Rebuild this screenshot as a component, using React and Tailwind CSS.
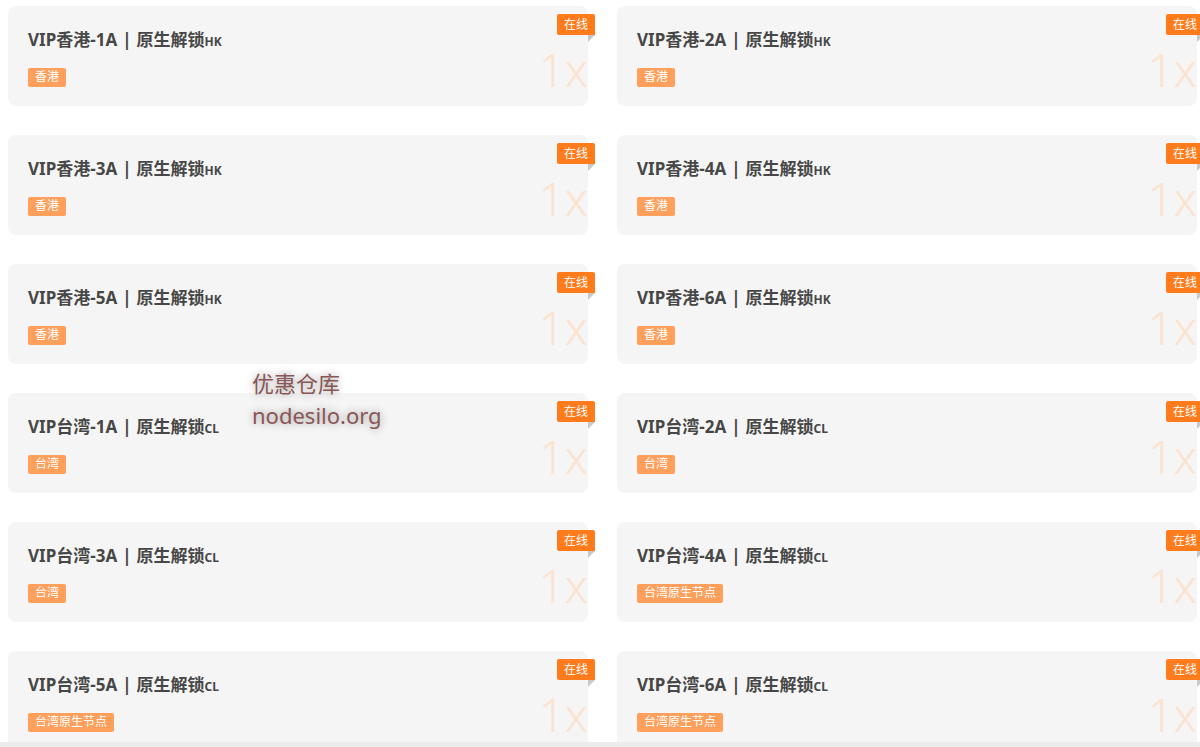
const nodes = [
  { name: 'VIP香港-1A', suffix: 'HK', tag: '香港' },
  { name: 'VIP香港-2A', suffix: 'HK', tag: '香港' },
  { name: 'VIP香港-3A', suffix: 'HK', tag: '香港' },
  { name: 'VIP香港-4A', suffix: 'HK', tag: '香港' },
  { name: 'VIP香港-5A', suffix: 'HK', tag: '香港' },
  { name: 'VIP香港-6A', suffix: 'HK', tag: '香港' },
  { name: 'VIP台湾-1A', suffix: 'CL', tag: '台湾' },
  { name: 'VIP台湾-2A', suffix: 'CL', tag: '台湾' },
  { name: 'VIP台湾-3A', suffix: 'CL', tag: '台湾' },
  { name: 'VIP台湾-4A', suffix: 'CL', tag: '台湾原生节点' },
  { name: 'VIP台湾-5A', suffix: 'CL', tag: '台湾原生节点' },
  { name: 'VIP台湾-6A', suffix: 'CL', tag: '台湾原生节点' },
];

export default function App() {
  return (
    <div
      className="relative h-[747px] overflow-hidden bg-white"
      style={{ fontFamily: '"Noto Sans", "Noto Sans CJK SC", sans-serif' }}
    >
      <div className="grid grid-cols-2 gap-x-[29px] gap-y-[29px] pl-2 pr-[3px] pt-[6px]">
        {nodes.map((n) => (
          <NodeCard key={n.name} {...n} />
        ))}
      </div>

      {/* watermark */}
      <div className="absolute left-[252px] top-[367px] text-[22px] leading-[32px] text-[#8a5656] [text-shadow:0_0_8px_rgba(0,0,0,0.4)]">
        <div>优惠仓库</div>
        <div>nodesilo.org</div>
      </div>

      <div className="fixed bottom-0 left-0 right-0 h-[5px] bg-[#ececec]" />
    </div>
  );
}

function NodeCard({ name, suffix, tag }) {
  return (
    <div className="relative h-[100px] rounded-lg bg-[#f5f5f5] pl-5 pt-[21px]">
      <div className="flex items-baseline text-[17px] font-bold text-[#474747]">
        <span>{name}</span>
        <span className="px-[5px]">|</span>
        <span>原生解锁</span>
        <span className="text-[12px]">{suffix}</span>
      </div>
      <div className="mt-[15px] inline-flex h-[19px] items-center rounded-[2px] bg-[#ff9f5c] px-[7px] text-[12px] text-white">
        {tag}
      </div>

      <div className="absolute right-[-7px] top-[8px]">
        <div className="flex h-[21px] w-[38px] items-center justify-center rounded-[2px] rounded-br-none bg-[#ff7b1c] text-[12px] text-white">
          在线
        </div>
        <div className="ml-auto h-0 w-0 border-t-[7px] border-r-[7px] border-t-[#c9c9c9] border-r-transparent" />
      </div>

      <div className="absolute right-0 top-[40px] text-[46px] font-light leading-none text-[#fce3cf]">
        1x
      </div>
    </div>
  );
}
